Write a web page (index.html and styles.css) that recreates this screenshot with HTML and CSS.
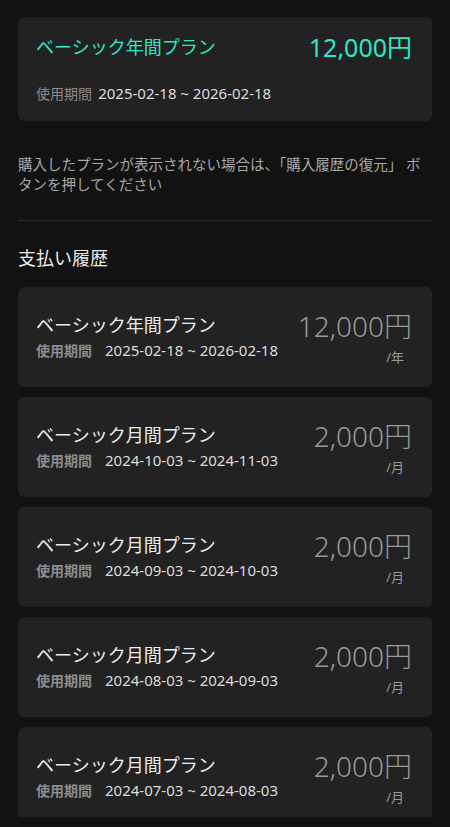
FILE: index.html
```html
<!DOCTYPE html>
<html lang="ja">
<head>
    <meta charset="UTF-8">
    <meta name="viewport" content="width=device-width, initial-scale=1.0">
    <title>購入プラン</title>
    <link rel="stylesheet" href="styles.css">
</head>
<body>
    <div class="screen">
        <div class="content">
            <!-- 現在のプラン -->
            <div class="current-plan">
                <div class="current-top">
                    <span class="current-name">ベーシック年間プラン</span>
                    <span class="current-price">12,000円</span>
                </div>
                <div class="current-period">
                    <span class="period-label">使用期間</span>
                    <span class="period-date">2025-02-18 ~ 2026-02-18</span>
                </div>
            </div>

            <p class="notice">購入したプランが表示されない場合は、「購入履歴の復元」 ボタンを押してください</p>

            <hr class="divider">

            <h2 class="section-title">支払い履歴</h2>

            <div class="history-list" id="historyList">
                <!-- 履歴カードはスクリプトで追加 -->
            </div>
        </div>
    </div>

    <script>
        var payments = [
            { name: "ベーシック年間プラン", from: "2025-02-18", to: "2026-02-18", price: 12000, unit: "年" },
            { name: "ベーシック月間プラン", from: "2024-10-03", to: "2024-11-03", price: 2000, unit: "月" },
            { name: "ベーシック月間プラン", from: "2024-09-03", to: "2024-10-03", price: 2000, unit: "月" },
            { name: "ベーシック月間プラン", from: "2024-08-03", to: "2024-09-03", price: 2000, unit: "月" },
            { name: "ベーシック月間プラン", from: "2024-07-03", to: "2024-08-03", price: 2000, unit: "月" }
        ];

        // 数字に千単位のカンマを追加
        function numberWithCommas(x) {
            return x.toString().replace(/\B(?=(\d{3})+(?!\d))/g, ",");
        }

        function addCards() {
            var list = document.getElementById("historyList");
            for (var i = 0; i < payments.length; i++) {
                var p = payments[i];
                var card = document.createElement("div");
                card.className = "history-card";
                card.innerHTML =
                    '<div class="history-left">' +
                        '<div class="history-name">' + p.name + '</div>' +
                        '<div class="history-period">' +
                            '<span class="history-label">使用期間</span>' +
                            '<span class="history-date">' + p.from + ' ~ ' + p.to + '</span>' +
                        '</div>' +
                    '</div>' +
                    '<div class="history-right">' +
                        '<div class="history-price">' + numberWithCommas(p.price) + '円</div>' +
                        '<div class="history-unit">/' + p.unit + '</div>' +
                    '</div>';
                list.appendChild(card);
            }
        }

        addCards();
    </script>
</body>
</html>
```

FILE: styles.css
```css
body {
    margin: 0;
    padding: 0;
    background-color: #121212;
    color: #e6e6e6;
    font-family: "Noto Sans", "Noto Sans CJK JP", sans-serif;
}

.screen {
    height: 827px;
    overflow: hidden;
}

.content {
    height: 817px; /* 下の10pxは余白 */
    overflow: hidden;
    padding: 17px 18px 0;
    box-sizing: border-box;
}

/* 現在のプラン */
.current-plan {
    background-color: #222222;
    border-radius: 6px;
    padding: 12px 20px 17px 18px;
}

.current-top {
    display: flex;
    justify-content: space-between;
    align-items: center;
    height: 36px;
}

.current-name {
    font-size: 18px;
    line-height: 24px;
    color: #2ee6c8;
}

.current-price {
    font-size: 25px;
    line-height: 36px;
    color: #2ee6c8;
}

.current-period {
    margin-top: 18px;
    line-height: 20px;
}

.period-label {
    font-size: 14px;
    color: #8c8c8c;
    margin-right: 2px;
}

.period-date {
    font-size: 15px;
    color: #dcdcdc;
}

.notice {
    margin: 33px 0 0;
    font-size: 14.5px;
    line-height: 20px;
    color: #a8a8a8;
}

.divider {
    margin: 26px 0 0;
    border: none;
    border-top: 1px solid #2e2e2e;
}

.section-title {
    margin: 24px 0 0;
    font-size: 18px;
    line-height: 26px;
    font-weight: normal;
    color: #ececec;
}

/* 支払い履歴 */
.history-list {
    margin-top: 16px;
    display: flex;
    flex-direction: column;
    gap: 10px;
}

.history-card {
    background-color: #222222;
    border-radius: 6px;
    display: flex;
    justify-content: space-between;
    align-items: center;
    padding: 22px 20px 22px 18px;
}

.history-name {
    font-size: 18px;
    line-height: 24px;
    color: #ececec;
}

.history-period {
    margin-top: 2px;
    line-height: 22px;
}

.history-label {
    font-size: 14px;
    font-weight: bold;
    color: #8c8c8c;
    margin-right: 13px;
}

.history-date {
    font-size: 15px;
    color: #dcdcdc;
}

.history-right {
    text-align: right;
}

.history-price {
    font-size: 28px;
    line-height: 34px;
    font-weight: 300;
    color: #9a9a9a;
}

.history-unit {
    margin-top: 6px;
    margin-right: 8px;
    font-size: 13px;
    line-height: 16px;
    color: #9a9a9a;
}
```
